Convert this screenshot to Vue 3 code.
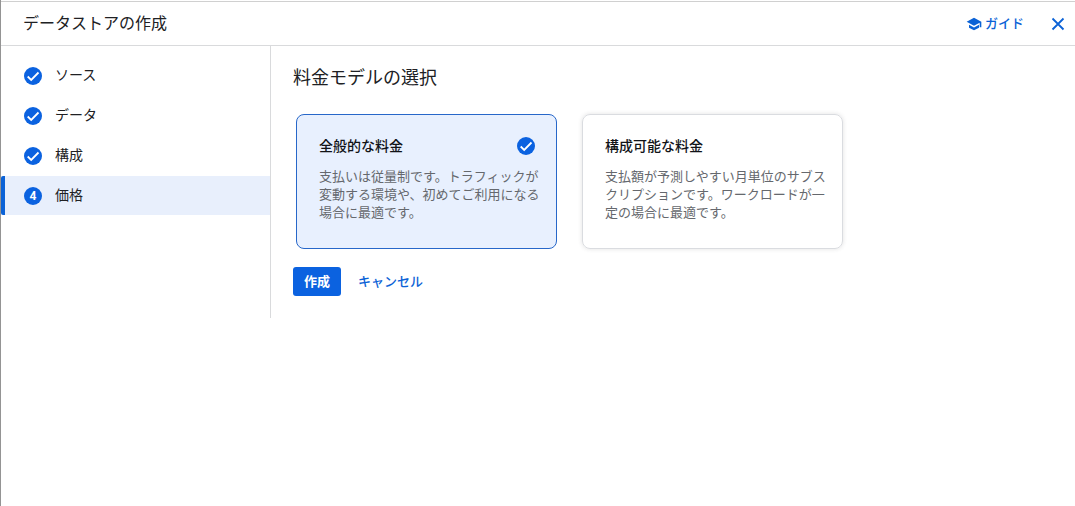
<script setup>
import { ref } from 'vue'

const steps = [
  { label: 'ソース', done: true },
  { label: 'データ', done: true },
  { label: '構成', done: true },
  { label: '価格', done: false },
]

const plans = [
  {
    id: 'general',
    title: '全般的な料金',
    text: '支払いは従量制です。トラフィックが変動する環境や、初めてご利用になる場合に最適です。',
  },
  {
    id: 'configurable',
    title: '構成可能な料金',
    text: '支払額が予測しやすい月単位のサブスクリプションです。ワークロードが一定の場合に最適です。',
  },
]

const selected = ref('general')
</script>

<template>
  <div class="panel">
    <header class="header">
      <h1 class="title">データストアの作成</h1>
      <a class="guide" href="#guide">
        <svg class="guide-icon" viewBox="0 0 24 24" aria-hidden="true">
          <path d="M4.500 13.200v4.300L12 21.500l7.500-4v-4.300L12 17.200zM12 2.500L1 8.800l11 6 8.500-4.600V17H23V8.800z" />
        </svg>
        ガイド
      </a>
      <button class="close" type="button" aria-label="閉じる">
        <svg viewBox="0 0 14 14" aria-hidden="true">
          <path d="M1.500 1.500l11 11M12.500 1.500l-11 11" />
        </svg>
      </button>
    </header>

    <div class="body">
      <nav class="sidebar">
        <ol class="steps">
          <li v-for="(step, i) in steps" :key="step.label">
            <a
              class="step"
              :class="{ active: !step.done }"
              href="#step"
              :aria-current="step.done ? undefined : 'step'"
            >
              <span class="marker">
                <svg v-if="step.done" viewBox="0 0 18 18" aria-hidden="true">
                  <path d="M3.700 9.500l3.500 3.500 7.300-7.500" />
                </svg>
                <template v-else>{{ i + 1 }}</template>
              </span>
              <span class="step-label">{{ step.label }}</span>
            </a>
          </li>
        </ol>
      </nav>

      <main class="content">
        <h2 class="heading">料金モデルの選択</h2>
        <div class="cards" role="radiogroup" aria-label="料金モデルの選択">
          <label
            v-for="plan in plans"
            :key="plan.id"
            class="card"
            :class="{ selected: selected === plan.id }"
          >
            <input v-model="selected" class="radio" type="radio" name="plan" :value="plan.id" />
            <span class="card-head">
              <span class="card-title">{{ plan.title }}</span>
              <span v-if="selected === plan.id" class="marker">
                <svg viewBox="0 0 18 18" aria-hidden="true">
                  <path d="M3.700 9.500l3.500 3.500 7.300-7.500" />
                </svg>
              </span>
            </span>
            <span class="card-text">{{ plan.text }}</span>
          </label>
        </div>
        <div class="actions">
          <button class="button primary" type="button">作成</button>
          <button class="button plain" type="button">キャンセル</button>
        </div>
      </main>
    </div>
  </div>
</template>

<style>
body {
  background: #fff;
}
</style>

<style scoped>
.panel {
  box-sizing: border-box;
  min-height: 100vh;
  padding-top: 1px;
  border-left: 1px solid #949494;
  color: #202124;
  font-family: Roboto, "Noto Sans CJK JP", sans-serif;
  font-size: 14px;
  line-height: 20px;
}

.header {
  display: flex;
  align-items: center;
  box-sizing: border-box;
  height: 45px;
  padding: 0 7px 0 22px;
  border-top: 1px solid #d0d0d0;
  border-bottom: 1px solid #d9dadc;
}

.title {
  flex: 1;
  margin: 0;
  font-size: 16px;
  font-weight: 400;
  line-height: 24px;
}

.guide {
  display: flex;
  align-items: center;
  gap: 3px;
  margin-right: 24px;
  color: #0b62d6;
  font-size: 13px;
  font-weight: 500;
  text-decoration: none;
}

.guide-icon {
  width: 16px;
  height: 16px;
  fill: #0b62d6;
}

.close {
  display: flex;
  align-items: center;
  justify-content: center;
  width: 20px;
  height: 20px;
  padding: 0;
  border: 0;
  background: none;
  cursor: pointer;
}

.close svg {
  width: 14px;
  height: 14px;
  fill: none;
  stroke: #0b62d6;
  stroke-width: 1.8;
}

.body {
  display: flex;
  align-items: stretch;
}

.sidebar {
  flex: 0 0 269px;
  border-right: 1px solid #d9dadc;
}

.steps {
  display: grid;
  gap: 1px;
  margin: 0;
  padding: 10px 0 0;
  list-style: none;
}

.step {
  display: flex;
  align-items: center;
  gap: 13px;
  box-sizing: border-box;
  height: 39px;
  padding-left: 19px;
  border-left: 4px solid transparent;
  border-radius: 2px 0 0 2px;
  color: inherit;
  text-decoration: none;
}

.step.active {
  border-left-color: #0b62d6;
  background: #e8effc;
}

.step-label {
  padding-bottom: 2px;
}

.marker {
  display: flex;
  flex: none;
  align-items: center;
  justify-content: center;
  width: 18px;
  height: 18px;
  border-radius: 50%;
  background: #0b62e0;
  color: #fff;
  font-size: 12px;
  font-weight: 700;
  line-height: 18px;
}

.marker svg {
  width: 18px;
  height: 18px;
  fill: none;
  stroke: #fff;
  stroke-width: 1.8;
}

.content {
  flex: 1;
  min-width: 0;
  padding: 20px 22px 22px;
}

.heading {
  margin: 0 0 24px;
  font-size: 18px;
  font-weight: 400;
  line-height: 24px;
}

.cards {
  display: flex;
  flex-wrap: wrap;
  gap: 25px;
  padding: 0 3px;
}

.card {
  position: relative;
  box-sizing: border-box;
  width: 261px;
  min-height: 135px;
  padding: 20px 16px 24px 22px;
  border: 1px solid #dadce0;
  border-radius: 8px;
  box-shadow: 0 0 4px rgba(60, 64, 67, 0.16);
  cursor: pointer;
}

.card.selected {
  border-color: #2767c9;
  background: #e8f0fe;
  box-shadow: none;
}

.radio {
  position: absolute;
  width: 1px;
  height: 1px;
  margin: 0;
  opacity: 0;
}

.card-head {
  display: flex;
  align-items: center;
  justify-content: space-between;
  padding-right: 5px;
}

.card-title {
  color: #111317;
  font-weight: 500;
  line-height: 22px;
}

.card-text {
  display: block;
  margin-top: 11px;
  color: #65686d;
  font-size: 13px;
  line-height: 18px;
}

.actions {
  display: flex;
  gap: 6px;
  margin-top: 18px;
}

.button {
  height: 29px;
  padding: 0 11px;
  border: 0;
  border-radius: 3px;
  font-family: inherit;
  font-size: 13px;
  line-height: 20px;
  cursor: pointer;
}

.primary {
  background: #0b62e0;
  color: #fff;
  font-weight: 700;
}

.plain {
  background: none;
  color: #0b62d6;
  font-weight: 500;
}
</style>
